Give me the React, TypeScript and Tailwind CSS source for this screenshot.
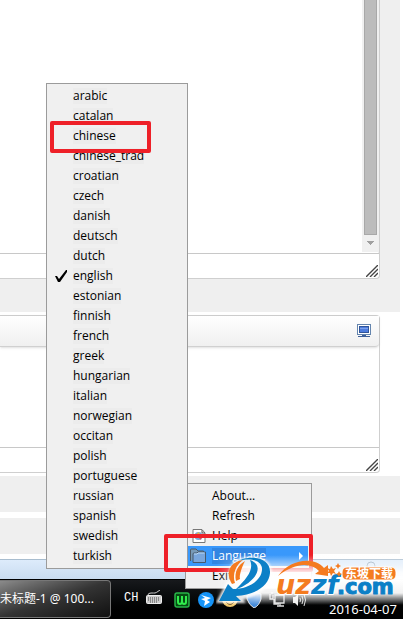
import React from "react";

const languages = [
  "arabic", "catalan", "chinese", "chinese_trad", "croatian", "czech",
  "danish", "deutsch", "dutch", "english", "estonian", "finnish",
  "french", "greek", "hungarian", "italian", "norwegian", "occitan",
  "polish", "portuguese", "russian", "spanish", "swedish", "turkish",
];

function ResizeGrip() {
  return (
    <svg className="h-3 w-3" viewBox="0 0 12 12" aria-hidden="true">
      <path d="M0 12L12 0M4 12L12 4M8 12L12 8" stroke="#444" strokeWidth="1.4" />
    </svg>
  );
}

function Editor() {
  return (
    <section className="bg-[#efefef]">
      <div className="mr-[20px] rounded-br border-r border-b border-[#cfcfcf] bg-white">
        <div className="flex h-[253px]">
          <div className="flex-1" />
          <div className="mb-px flex w-4 flex-col items-center bg-[#f0f0f0]">
            <div className="h-[235px] w-[13px] border border-t-0 border-[#a8a8a8] bg-[#bcbcbc]" />
            <svg className="mt-[6px] h-1 w-2" viewBox="0 0 8 4" shapeRendering="crispEdges">
              <path d="M0 0H8L4 4Z" fill="#a0a0a0" />
            </svg>
          </div>
          <div className="w-px bg-[#efefef]" />
        </div>
        <div className="flex h-[25px] items-end justify-end border-t border-[#c8c8c8] pr-px pb-px">
          <ResizeGrip />
        </div>
      </div>
      <div className="h-[33px]" />
    </section>
  );
}

function SourcePanel() {
  return (
    <section className="bg-white pt-[3px] pb-[3px]">
      <div className="mr-[23px] rounded-r border-y border-r border-[#cfcfcf]">
        <div className="flex h-[31px] items-center justify-end rounded-br border-b border-[#d0d0d0] bg-linear-to-b from-white to-[#f0f0f0] pr-2 shadow">
          <button type="button" aria-label="Preview" className="h-[14px] w-[14px]">
            <svg viewBox="0 0 14 14" className="h-full w-full" shapeRendering="crispEdges">
              <rect x=".5" y=".5" width="13" height="10" fill="#fff" stroke="#6485ae" />
              <rect x="2.5" y="2.5" width="9" height="6" fill="#4e7cdd" stroke="#315599" />
              <path d="M3 4H11" stroke="#7ba0eb" />
              <path d="M5 11h4v1h4v1H1v-1h4z" fill="#3d5f99" />
            </svg>
          </button>
        </div>
        <div className="h-[100px]" />
        <div className="flex h-[25px] items-end justify-end border-t border-[#c8c8c8] pr-px pb-px">
          <ResizeGrip />
        </div>
      </div>
    </section>
  );
}

function Taskbar() {
  return (
    <footer className="flex h-10 border-t border-black bg-linear-to-b from-[#17191c] via-[#060809] to-black text-white">
      <button
        type="button"
        className="flex h-[38px] w-[111px] items-center overflow-hidden rounded-r-sm border border-l-0 border-[#777] bg-linear-to-br from-[#8b8b8b] via-[#343434] to-[#111] text-left font-['Noto_Sans','Noto_Sans_CJK_SC',sans-serif] text-xs whitespace-nowrap"
      >
        未标题-1 @ 100...
      </button>
      <div className="ml-[13px] flex h-[36px] items-center">
        <span className="w-[22px] font-['Liberation_Mono',monospace] text-xs">CH</span>
        <svg className="h-4 w-4" viewBox="0 0 16 16" fill="none">
          <path d="M2 5Q2 3 5 3T9 3T14 0" stroke="#ccc" />
          <rect x=".5" y="5.5" width="15" height="8" rx="1" fill="#ccc" stroke="#eee" />
          <path d="M2 8H14M2 10H14M4 12H12" stroke="#444" strokeDasharray="1 1" />
        </svg>
      </div>
      <svg className="mt-3 ml-3 h-4 w-[132px]" viewBox="0 0 132 16" fill="none">
        <rect x="1" y="1" width="14" height="14" rx="2" fill="#064b13" stroke="#28b648" strokeWidth="1.5" />
        <path d="M4 4V10Q4 12 6 12Q8 12 8 9V4M8 9Q8 12 10 12Q12 12 12 10V4" stroke="#30ed4c" strokeWidth="2" />
        <circle cx="32" cy="8" r="8" fill="#1593f6" />
        <path d="M27 3L37 6L33 8L36 10L30 14L31 9L27 7L31 6Z" fill="#fff" />
        <circle cx="56" cy="7" r="8" fill="#f0c76c" />
        <path d="M52 10Q56 15 60 10" stroke="#664a20" />
        <path d="M73 2L80 0L87 2V7Q85 14 80 16Q75 13 73 7Z" fill="#448ad8" stroke="#ddd" />
        <path d="M99 3V7H96V2M98 2V0M100 7V12H105M101 3H110V11H101ZM103 14H110M106 11V14" stroke="#ddd" strokeWidth="1.3" />
        <path d="M119 5H121L124 2V14L121 11H119Z" fill="#eee" />
        <path d="M126 6Q127 8 126 10M128 4Q130 8 128 12M130 2Q133 8 130 14" stroke="#ddd" />
      </svg>
    </footer>
  );
}

function LanguageMenu() {
  return (
    <ul
      role="menu"
      aria-label="Languages"
      className="absolute top-[83px] left-[46px] w-[142px] border border-[#9b9b9b] bg-[#f0f0f0] py-[2px] font-['Open_Sans',sans-serif] text-xs text-black"
    >
      {languages.map((name) => (
        <li key={name} role="none">
          <button
            type="button"
            role="menuitemradio"
            aria-checked={name === "english"}
            className="flex h-5 w-full items-center text-left"
          >
            <span className="flex w-[26px] justify-end pr-[6px]">
              {name === "english" && (
                <svg className="h-3 w-3" viewBox="0 0 12 12">
                  <path d="M0 6H2L4 9L11 0H12V2L5 12H3Z" fill="#000" />
                </svg>
              )}
            </span>
            <span className="bg-[#ececec] leading-4">{name}</span>
          </button>
        </li>
      ))}
    </ul>
  );
}

const commands = ["About...", "Refresh", "Help", "Language", "Exit"];

function CommandIcon({ name }: { name: string }) {
  if (name === "Help") {
    return (
      <svg className="ml-[2px] h-[14px] w-[14px]" viewBox="0 0 14 14">
        <path d="M1 .5H10L13 4V13.5H1Z" fill="#fff" stroke="#777" />
        <path d="M10 1V4H13" fill="none" stroke="#555" />
        <circle cx="6.5" cy="7" r="4" fill="#7eabd7" />
        <path d="M3 6L7 3L8 6L5 8Z" fill="#e6b642" />
        <path d="M6 8L10 7L9 11Z" fill="#d74c62" />
      </svg>
    );
  }
  if (name === "Language") {
    return (
      <svg className="h-4 w-4" viewBox="0 0 16 16">
        <path d="M.5 13V2Q.5 1 1.5 1H6L8 3H13.5V6" fill="#789ab7" stroke="#4e5a66" />
        <path d="M3 14.5V6Q3 5 4 5H7L8 4H15.5V14.5Z" fill="#79a6dc" stroke="#46596c" />
        <path d="M4 6H7L8 5H14.5" fill="none" stroke="#b9d9f6" />
      </svg>
    );
  }
  return null;
}

function MainMenu() {
  return (
    <ul
      role="menu"
      aria-label="Commands"
      className="absolute top-[483px] left-[185px] w-[127px] border border-[#9b9b9b] bg-[#f0f0f0] py-[2px] pr-[3px] pl-[2px] font-['Open_Sans',sans-serif] text-xs text-black"
    >
      {commands.map((name) => (
        <li key={name} role="none">
          <button
            type="button"
            role="menuitem"
            className={
              name === "Language"
                ? "flex h-5 w-full items-center bg-[#3998fb] text-left text-white"
                : "flex h-5 w-full items-center text-left"
            }
          >
            <span className="flex w-[24px] items-center pl-[2px]">
              <CommandIcon name={name} />
            </span>
            <span className={name === "Language" ? "bg-[#3185e2] leading-4" : "leading-4"}>{name}</span>
            {name === "Language" && (
              <svg className="mr-[5px] ml-auto h-2 w-1" viewBox="0 0 4 8">
                <path d="M0 0L4 4L0 8Z" fill="#fff" />
              </svg>
            )}
          </button>
        </li>
      ))}
    </ul>
  );
}

function Watermark() {
  return (
    <div className="pointer-events-none absolute top-[555px] left-[216px] h-[50px] w-[187px]">
      <svg className="h-full w-full" viewBox="0 0 187 50">
        <defs>
          <linearGradient id="mist" x2="0" y2="1">
            <stop stopColor="#fff" stopOpacity="0" />
            <stop offset=".35" stopColor="#fff" stopOpacity=".9" />
            <stop offset=".5" stopColor="#fff" />
            <stop offset=".76" stopColor="#fff" stopOpacity=".95" />
            <stop offset="1" stopColor="#fff" stopOpacity="0" />
          </linearGradient>
          <linearGradient id="mistEdge">
            <stop stopColor="#000" />
            <stop offset=".22" stopColor="#fff" />
          </linearGradient>
          <mask id="mistMask">
            <rect width="187" height="50" fill="url(#mistEdge)" />
          </mask>
          <filter id="halo">
            <feGaussianBlur stdDeviation="1" />
          </filter>
        </defs>
        <rect width="187" height="50" fill="url(#mist)" mask="url(#mistMask)" />
        <path
          d="M3 46L12 29L17 33Q10 10 25 5Q52 -1 54 17Q53 37 24 43L26 46Z"
          fill="#fff" stroke="#fff" strokeWidth="4" opacity=".85" filter="url(#halo)"
        />
        <path d="M16 29C9 17 14 7 27 5C20 10 16 19 19 28Z" fill="#f47b20" />
        <path d="M20 26C18 17 22 10 29 6C26 12 23 20 24 24Z" fill="#f47b20" />
        <path d="M21 6C36-1 55 3 54 18C53 31 39 40 20 41L25 46L3 46L12 29L17 34C32 34 45 26 46 15C47 6 36 2 21 6Z" fill="#0c80c7" />
        <path d="M34 5C49 10 41 27 19 35C32 23 38 14 34 5Z" fill="#0c80c7" />
        <path d="M62 21C74 4 98 1 108 13L112 10L112 21L99 19L103 16C94 7 79 8 62 21Z" fill="#f47b20" />
        <text
          x="60" y="39"
          className="font-['DejaVu_Sans',sans-serif] text-[27px] font-bold italic [paint-order:stroke]"
          fill="#0c80c7" stroke="#fff" strokeWidth="2" strokeLinejoin="round"
        >
          <tspan fill="#f47b20">uz</tspan>zf
        </text>
        <text
          x="121" y="39"
          className="font-['DejaVu_Sans',sans-serif] text-[21px] font-bold [paint-order:stroke]"
          fill="#0c80c7" stroke="#0c80c7" strokeWidth="1" strokeLinejoin="round"
        >
          .com
        </text>
        <rect x="126" y="12" width="54" height="13" rx="5" fill="#f47b20" stroke="#fff" />
        <text x="129" y="23" className="font-['Noto_Sans_CJK_SC',sans-serif] text-xs font-bold" fill="#fff">
          东坡下载
        </text>
        <path d="M115 11l2 3 3-1-2 3 2 3-3-1-2 3-1-3-3 0 2-2-2-3 3 1zM122 8l1 2 2 1-2 1-1 2-1-2-2-1 2-1zM123 16l1 2 2 1-2 1-1 2-1-2-2-1 2-1z" fill="#f47b20" />
      </svg>
    </div>
  );
}

export default function App() {
  return (
    <main className="relative min-h-screen overflow-hidden bg-white">
      <div className="border-r-[3px] border-white">
        <Editor />
        <div className="-mr-[3px]"><SourcePanel /></div>
        <div className="mb-1.5 h-9 bg-[#efefef]" />
        <div className="mb-[5px] h-9 bg-[#efefef]" />
      </div>
      <div className="flex h-5 justify-end border-t border-[#a8bdcf] bg-linear-to-b from-[#ddebfb] to-[#c9dcf0] pr-[26px]">
        <svg className="h-3 w-3" viewBox="0 0 12 12" fill="none" stroke="#8da3b8">
          <circle cx="6" cy="6" r="4" />
          <path d="M9 9L12 12" />
        </svg>
      </div>
      <Taskbar />
      <MainMenu />
      <LanguageMenu />
      <div className="pointer-events-none absolute top-[121px] left-[50px] h-[32px] w-[101px] rounded-xs border-4 border-[#ee2028]" />
      <div className="pointer-events-none absolute top-[534px] left-[164px] h-[38px] w-[149px] rounded-xs border-4 border-[#ee2028]" />
      <Watermark />
      <time dateTime="2016-04-07" className="absolute top-[601px] left-[329px] font-['Noto_Sans',sans-serif] text-[13px] leading-4 text-white">
        2016-04-07
      </time>
    </main>
  );
}
